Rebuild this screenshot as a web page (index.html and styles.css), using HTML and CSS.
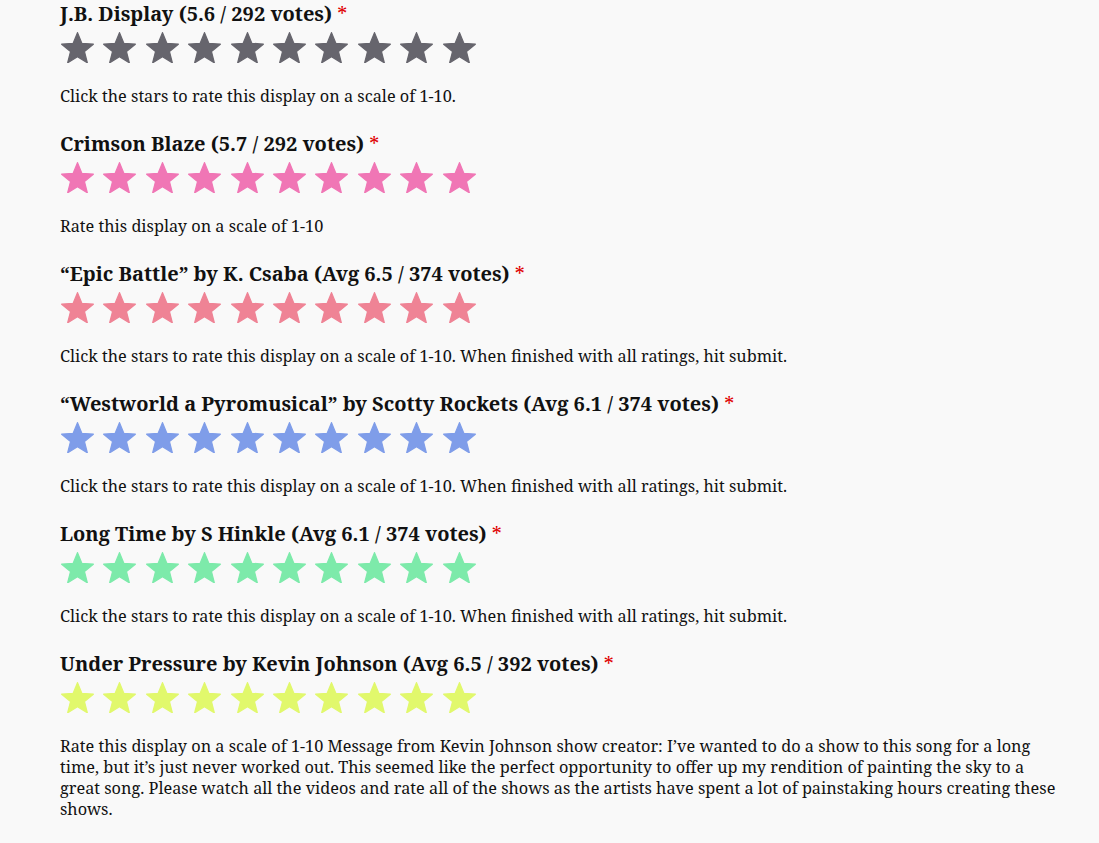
FILE: index.html
```html
<!DOCTYPE html>
<html lang="en">
<head>
<meta charset="utf-8">
<title>Ratings</title>
<link rel="stylesheet" href="styles.css">
</head>
<body>
<svg width="0" height="0" class="defs">
  <defs>
    <polygon id="star" points="50,0 63.6,33.86 100,36.33 72,59.72 80.9,95.1 50,75.7 19.1,95.1 28,59.72 0,36.33 36.4,33.86"/>
  </defs>
</svg>
<main class="form">
  <section class="field c-gray">
    <h3 class="label">J.B. Display (5.6 / 292 votes) <span class="req">*</span></h3>
    <div class="stars">
      <svg viewBox="-2 -2 104 99.1"><use href="#star"/></svg><svg viewBox="-2 -2 104 99.1"><use href="#star"/></svg><svg viewBox="-2 -2 104 99.1"><use href="#star"/></svg><svg viewBox="-2 -2 104 99.1"><use href="#star"/></svg><svg viewBox="-2 -2 104 99.1"><use href="#star"/></svg><svg viewBox="-2 -2 104 99.1"><use href="#star"/></svg><svg viewBox="-2 -2 104 99.1"><use href="#star"/></svg><svg viewBox="-2 -2 104 99.1"><use href="#star"/></svg><svg viewBox="-2 -2 104 99.1"><use href="#star"/></svg><svg viewBox="-2 -2 104 99.1"><use href="#star"/></svg>
    </div>
    <p class="desc">Click the stars to rate this display on a scale of 1-10.</p>
  </section>
  <section class="field c-pink">
    <h3 class="label">Crimson Blaze (5.7 / 292 votes) <span class="req">*</span></h3>
    <div class="stars">
      <svg viewBox="-2 -2 104 99.1"><use href="#star"/></svg><svg viewBox="-2 -2 104 99.1"><use href="#star"/></svg><svg viewBox="-2 -2 104 99.1"><use href="#star"/></svg><svg viewBox="-2 -2 104 99.1"><use href="#star"/></svg><svg viewBox="-2 -2 104 99.1"><use href="#star"/></svg><svg viewBox="-2 -2 104 99.1"><use href="#star"/></svg><svg viewBox="-2 -2 104 99.1"><use href="#star"/></svg><svg viewBox="-2 -2 104 99.1"><use href="#star"/></svg><svg viewBox="-2 -2 104 99.1"><use href="#star"/></svg><svg viewBox="-2 -2 104 99.1"><use href="#star"/></svg>
    </div>
    <p class="desc">Rate this display on a scale of 1-10</p>
  </section>
  <section class="field c-coral">
    <h3 class="label">“Epic Battle” by K. Csaba (Avg 6.5 / 374 votes) <span class="req">*</span></h3>
    <div class="stars">
      <svg viewBox="-2 -2 104 99.1"><use href="#star"/></svg><svg viewBox="-2 -2 104 99.1"><use href="#star"/></svg><svg viewBox="-2 -2 104 99.1"><use href="#star"/></svg><svg viewBox="-2 -2 104 99.1"><use href="#star"/></svg><svg viewBox="-2 -2 104 99.1"><use href="#star"/></svg><svg viewBox="-2 -2 104 99.1"><use href="#star"/></svg><svg viewBox="-2 -2 104 99.1"><use href="#star"/></svg><svg viewBox="-2 -2 104 99.1"><use href="#star"/></svg><svg viewBox="-2 -2 104 99.1"><use href="#star"/></svg><svg viewBox="-2 -2 104 99.1"><use href="#star"/></svg>
    </div>
    <p class="desc">Click the stars to rate this display on a scale of 1-10. When finished with all ratings, hit submit.</p>
  </section>
  <section class="field c-blue">
    <h3 class="label">“Westworld a Pyromusical” by Scotty Rockets (Avg 6.1 / 374 votes) <span class="req">*</span></h3>
    <div class="stars">
      <svg viewBox="-2 -2 104 99.1"><use href="#star"/></svg><svg viewBox="-2 -2 104 99.1"><use href="#star"/></svg><svg viewBox="-2 -2 104 99.1"><use href="#star"/></svg><svg viewBox="-2 -2 104 99.1"><use href="#star"/></svg><svg viewBox="-2 -2 104 99.1"><use href="#star"/></svg><svg viewBox="-2 -2 104 99.1"><use href="#star"/></svg><svg viewBox="-2 -2 104 99.1"><use href="#star"/></svg><svg viewBox="-2 -2 104 99.1"><use href="#star"/></svg><svg viewBox="-2 -2 104 99.1"><use href="#star"/></svg><svg viewBox="-2 -2 104 99.1"><use href="#star"/></svg>
    </div>
    <p class="desc">Click the stars to rate this display on a scale of 1-10. When finished with all ratings, hit submit.</p>
  </section>
  <section class="field c-green">
    <h3 class="label">Long Time by S Hinkle (Avg 6.1 / 374 votes) <span class="req">*</span></h3>
    <div class="stars">
      <svg viewBox="-2 -2 104 99.1"><use href="#star"/></svg><svg viewBox="-2 -2 104 99.1"><use href="#star"/></svg><svg viewBox="-2 -2 104 99.1"><use href="#star"/></svg><svg viewBox="-2 -2 104 99.1"><use href="#star"/></svg><svg viewBox="-2 -2 104 99.1"><use href="#star"/></svg><svg viewBox="-2 -2 104 99.1"><use href="#star"/></svg><svg viewBox="-2 -2 104 99.1"><use href="#star"/></svg><svg viewBox="-2 -2 104 99.1"><use href="#star"/></svg><svg viewBox="-2 -2 104 99.1"><use href="#star"/></svg><svg viewBox="-2 -2 104 99.1"><use href="#star"/></svg>
    </div>
    <p class="desc">Click the stars to rate this display on a scale of 1-10. When finished with all ratings, hit submit.</p>
  </section>
  <section class="field c-yellow">
    <h3 class="label">Under Pressure by Kevin Johnson (Avg 6.5 / 392 votes) <span class="req">*</span></h3>
    <div class="stars">
      <svg viewBox="-2 -2 104 99.1"><use href="#star"/></svg><svg viewBox="-2 -2 104 99.1"><use href="#star"/></svg><svg viewBox="-2 -2 104 99.1"><use href="#star"/></svg><svg viewBox="-2 -2 104 99.1"><use href="#star"/></svg><svg viewBox="-2 -2 104 99.1"><use href="#star"/></svg><svg viewBox="-2 -2 104 99.1"><use href="#star"/></svg><svg viewBox="-2 -2 104 99.1"><use href="#star"/></svg><svg viewBox="-2 -2 104 99.1"><use href="#star"/></svg><svg viewBox="-2 -2 104 99.1"><use href="#star"/></svg><svg viewBox="-2 -2 104 99.1"><use href="#star"/></svg>
    </div>
    <p class="desc">Rate this display on a scale of 1-10 Message from Kevin Johnson show creator: I’ve wanted to do a show to this song for a long time, but it’s just never worked out. This seemed like the perfect opportunity to offer up my rendition of painting the sky to a great song. Please watch all the videos and rate all of the shows as the artists have spent a lot of painstaking hours creating these shows.</p>
  </section>
</main>
</body>
</html>
```
FILE: styles.css
```css
html, body {
  margin: 0;
  padding: 0;
  background: #f9f9f9;
}
body {
  font-family: "Noto Serif", "DejaVu Serif", serif;
  color: #111;
}
.defs {
  position: absolute;
  width: 0;
  height: 0;
}
.form {
  padding: 0 0 0 60px;
  width: 1000px;
}
.field {
  min-height: 130px;
}
.label {
  margin: 0;
  font-size: 20px;
  line-height: 28px;
  font-weight: 700;
}
.req {
  color: #e00000;
  font-weight: 400;
}
.stars {
  display: flex;
  gap: 9.4px;
  margin-top: 4px;
  padding-left: 1px;
}
.stars svg {
  width: 33px;
  height: 31.4px;
  display: block;
}
.stars svg use {
  stroke-width: 4;
  stroke-linejoin: round;
}
.desc {
  margin: 23px 0 0;
  font-size: 16.3px;
  line-height: 21px;
}
.c-gray .stars svg { fill: #66656d; stroke: #66656d; }
.c-pink .stars svg { fill: #f076b5; stroke: #f076b5; }
.c-coral .stars svg { fill: #ef8395; stroke: #ef8395; }
.c-blue .stars svg { fill: #7f9de9; stroke: #7f9de9; }
.c-green .stars svg { fill: #7deaaa; stroke: #7deaaa; }
.c-yellow .stars svg { fill: #e1f86c; stroke: #e1f86c; }
```
